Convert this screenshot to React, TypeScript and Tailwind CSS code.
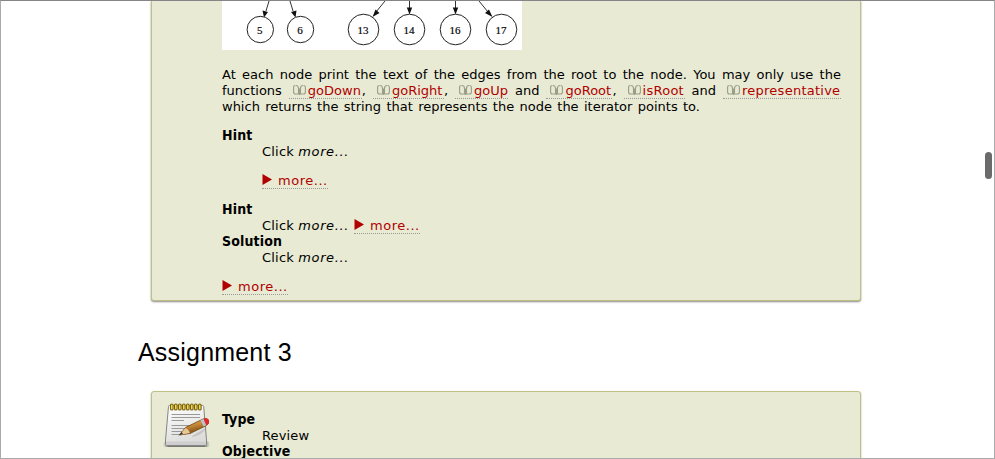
import type { ReactNode } from "react";

function Book() {
  return (
    <svg className="ml-1 mr-[2px] h-3 w-[13px] shrink-0 -translate-y-px" viewBox="0 0 13 12" fill="none" stroke="#9a9e88" strokeWidth="1.1">
      <path d="M2.500 1.500Q.6 1.500.6 3.500V8Q.6 10 2.500 10H5.500V4.500Q5.500 1.500 3 1.500" />
      <path d="M10.500 1.500Q12.400 1.500 12.400 3.500V8Q12.400 10 10.500 10H7.500V4.500Q7.500 1.500 10 1.500" />
      <path d="M6.500 4.500V11" />
    </svg>
  );
}

function Fn({ name, width, after = "", spacing = "" }: { name: string; width: string; after?: string; spacing?: string }) {
  return (
    <span className="flex">
      <a className={`flex h-4 items-center border-b border-dotted border-[#999] text-[#b00000] ${width}`}>
        <Book />
        <span className={`leading-4 ${spacing}`}>{name}</span>
      </a>
      {after}
    </span>
  );
}

function More() {
  return (
    <a className="flex h-4 w-[66px] items-center border-b border-dotted border-[#999] text-[#b00000]">
      <svg className="mr-[6px] h-[11px] w-[10px] shrink-0 -translate-y-px" viewBox="0 0 10 11">
        <path d="M.5 0L10 5.500L.5 11Z" fill="#b00000" />
      </svg>
      <span className="tracking-[0.53px]">more...</span>
    </a>
  );
}

function Words({ text }: { text: string }) {
  return <>{text.split(" ").map((w, i) => <span key={i}>{w}</span>)}</>;
}

function Term({ children }: { children: ReactNode }) {
  return <dt className="h-4 font-['DejaVu_Sans_Condensed','DejaVu_Sans',sans-serif] text-[14px] font-bold leading-4 tracking-[0.15px] [font-stretch:condensed]">{children}</dt>;
}

function Click() {
  return <span className="inline-block w-[87px] whitespace-nowrap"><span className="tracking-[0.2px]">Click </span><em className="tracking-[0.6px]">more...</em></span>;
}

function Node({ x, r, label }: { x: number; r: number; label: string }) {
  return (
    <g>
      <circle cx={x} cy="28.500" r={r} fill="white" stroke="#222" strokeWidth="1" />
      <text x={x - 0.5} y="32.500" textAnchor="middle" fontSize="11" stroke="#111" strokeWidth=".2" fontFamily="Liberation Serif, serif">{label}</text>
    </g>
  );
}

function Tree() {
  return (
    <svg className="block h-[49px] w-[300px] bg-white" viewBox="0 0 300 49">
      <g stroke="#333" strokeWidth="1">
        <path d="M47 0L44 10M68 0L71 10M163 0L154 11M187.500 0V8M233.500 0V8M257 0L266 11" />
      </g>
      <g fill="#111">
        <path d="M40.500 9.500L46 11L42 16.500ZM69 11L74.500 9.500L73.500 16.500ZM153.500 8.500L157.500 12L150.500 16ZM184.800 6.500H190.200L187.500 13.500ZM230.800 6.500H236.200L233.500 13.500ZM263 12L267 8.500L270.500 16Z" />
      </g>
      <Node x={38.3} r={13.2} label="5" />
      <Node x={78.5} r={13.2} label="6" />
      <Node x={141.5} r={15.3} label="13" />
      <Node x={187.5} r={15.3} label="14" />
      <Node x={233.5} r={15.3} label="16" />
      <Node x={279.5} r={15.3} label="17" />
    </svg>
  );
}

function Notepad() {
  return (
    <svg className="mt-px h-[48px] w-[48px] shrink-0" viewBox="0 0 48 48">
      <defs>
        <linearGradient id="paper" x1="0" y1="0" x2=".3" y2="1"><stop stopColor="#fff" /><stop offset="1" stopColor="#dcdcda" /></linearGradient>
        <linearGradient id="wood" x1="0" y1="0" x2=".4" y2="1"><stop stopColor="#e5ad5a" /><stop offset=".5" stopColor="#c98b38" /><stop offset="1" stopColor="#70430f" /></linearGradient>
        <linearGradient id="shade"><stop stopColor="#666" stopOpacity="0" /><stop offset=".12" stopColor="#555" stopOpacity=".75" /><stop offset=".88" stopColor="#555" stopOpacity=".75" /><stop offset="1" stopColor="#666" stopOpacity="0" /></linearGradient>
      </defs>
      <rect x="0" y="40.500" width="47" height="5.500" rx="2.500" fill="url(#shade)" />
      <path d="M5.500 5.500Q5.600 4.500 6.500 4.500H39.500Q40.500 4.500 40.700 5.500L43.500 39V43Q43.500 44.500 42 44.500H4Q2.500 44.500 2.500 43V39Z" fill="url(#paper)" stroke="#858585" />
      <path d="M3 40.500H43V44H3Z" fill="#cecece" />
      <path d="M8.500 13.500H37M8.500 16.500H37M8.500 19.500H21M8.500 24.500H33M8.500 27.500H26M8.500 30.500H22M8.500 33.500H16" stroke="#999" />
      {[7, 11, 15, 19, 23, 27, 31, 35].map((x) => (
        <rect key={x} x={x + 0.5} y="3" width="2.600" height="6" rx="1.300" fill="#f4de58" stroke="#78600c" strokeWidth="1.100" />
      ))}
      <path d="M29 35L44 26Q39 35 29 36Z" fill="#888" opacity=".3" />
      <path d="M16.500 34L22.500 26.500L40 18Q44 16.500 45.500 19Q46.500 23 43.500 24.500L27 32.500Z" fill="url(#wood)" stroke="#70430f" strokeWidth=".8" />
      <path d="M16.500 34L22.500 27Q25.500 28 27 32Z" fill="#e6c894" />
      <path d="M15.500 34.500L18.500 31L20 33Z" fill="#333" />
      <path d="M37.500 19.300L40.500 17.700L43.500 24L40.500 25.500Z" fill="#b9c2cb" />
      <path d="M40.500 17.700Q44.500 16.300 45.800 19Q47 22.500 43.300 24.200Z" fill="#e52631" />
    </svg>
  );
}

export default function App() {
  return (
    <div className="relative flex h-[459px] w-[995px] flex-col overflow-hidden border border-[#aaa] border-t-[#858585] bg-white font-['DejaVu_Sans',sans-serif] text-[13px] leading-4 text-black">
      <section className="ml-[150px] h-[300px] w-[710px] shrink-0 rounded-b-[3px] border border-t-0 border-[#bfc184] bg-[#e8ead4] pl-[70px] shadow-[0_1px_2px_#888]">
        <Tree />
        <div className="mt-[17px] w-[619px]">
          <div className="flex justify-between"><Words text="At each node print the text of the edges from the root to the node. You may only use the" /></div>
          <div className="flex justify-between">
            <span>functions</span>
            <Fn name="goDown" width="w-[73px]" after="," />
            <Fn name="goRight" width="w-[71px]" after="," />
            <Fn name="goUp" width="w-[53px]" />
            <span>and</span>
            <Fn name="goRoot" width="w-[66px]" after="," />
            <Fn name="isRoot" width="w-[61px]" spacing="tracking-[0.25px]" />
            <span>and</span>
            <Fn name="representative" width="w-[118px]" spacing="tracking-[0.25px]" />
          </div>
          <div className="flex w-[478px] justify-between"><Words text="which returns the string that represents the node the iterator points to." /></div>
        </div>
        <dl className="mt-3">
          <Term>Hint</Term>
          <dd className="ml-10 mt-px"><Click /><div className="mt-[13px]"><More /></div></dd>
          <div className="h-3" />
          <Term>Hint</Term>
          <dd className="ml-10 mt-px flex gap-[5px]"><Click /><More /></dd>
          <div className="-mt-px"><Term>Solution</Term></div>
          <dd className="ml-10 mt-px"><Click /></dd>
        </dl>
        <div className="mt-[13px]"><More /></div>
      </section>
      <h2 className="ml-[137px] mt-[36px] h-[32px] shrink-0 font-['Liberation_Sans',Arial,sans-serif] text-[25px] font-normal leading-[30px] tracking-[0.2px]">Assignment 3</h2>
      <section className="ml-[150px] mt-[22px] flex h-[100px] w-[710px] shrink-0 rounded-t-[3px] border border-[#bfc184] bg-[#e8ead4] pl-[11px] pt-[8px] shadow-[0_1px_2px_#aaa]">
        <Notepad />
        <dl className="ml-[11px] mt-[11px]">
          <Term>Type</Term>
          <dd className="ml-10 mt-px tracking-[0.15px]">Review</dd>
          <div className="-mt-px"><Term>Objective</Term></div>
        </dl>
      </section>
      <div className="absolute right-[2px] top-[151px] h-[27px] w-[7px] rounded-full bg-[#6b6b6b]" />
    </div>
  );
}
